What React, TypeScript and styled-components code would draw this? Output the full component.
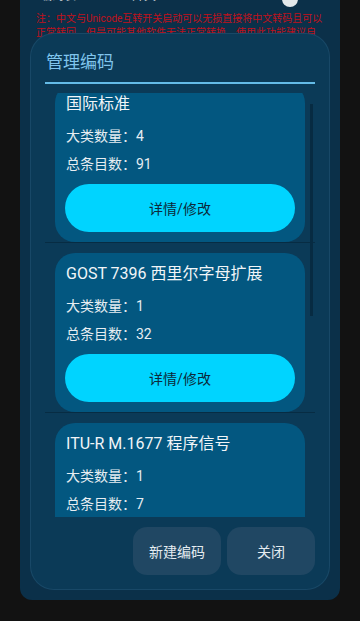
import { useLayoutEffect, useRef } from "react";
import styled, { createGlobalStyle } from "styled-components";

const GlobalStyle = createGlobalStyle`
  html, body {
    margin: 0;
    padding: 0;
    background: #121212;
  }
  body {
    font-family: Roboto, "Noto Sans CJK SC", sans-serif;
  }
`;

const codeTables = [
  { name: "国际标准", groups: 4, entries: 91 },
  { name: "GOST 7396 西里尔字母扩展", groups: 1, entries: 32 },
  { name: "ITU-R M.1677 程序信号", groups: 1, entries: 7 },
  { name: "日文假名", groups: 2, entries: 46 },
  { name: "自定义编码", groups: 1, entries: 12 },
];

const App = () => {
  const listRef = useRef<HTMLDivElement>(null);

  useLayoutEffect(() => {
    if (listRef.current) listRef.current.scrollTop = 20;
  }, []);

  return (
    <>
      <GlobalStyle />
      <Screen>
        <Panel>
          <TopStrip>
            <CutLabel>编码表</CutLabel>
            <CutLabel>开关</CutLabel>
            <Spacer />
            <SwitchKnob />
          </TopStrip>
          <Note>
            <NoteLine>注：中文与Unicode互转开关启动可以无损直接将中文转码且可以</NoteLine>
            <NoteLine>正常转回，但是可能其他软件无法正常转换，使用此功能建议自</NoteLine>
          </Note>
        </Panel>

        <Dialog>
          <DialogTitle>管理编码</DialogTitle>
          <TitleRule />
          <ListFrame>
            <List ref={listRef}>
              {codeTables.map((table) => (
                <Item key={table.name}>
                  <Card>
                    <CardTitle>{table.name}</CardTitle>
                    <Stats>
                      <Stat>大类数量：{table.groups}</Stat>
                      <Stat>总条目数：{table.entries}</Stat>
                    </Stats>
                    <DetailButton>详情/修改</DetailButton>
                  </Card>
                </Item>
              ))}
            </List>
            <ScrollThumb />
          </ListFrame>
          <Footer>
            <FooterButton>新建编码</FooterButton>
            <FooterButton>关闭</FooterButton>
          </Footer>
        </Dialog>
      </Screen>
    </>
  );
};

export default App;

const Screen = styled("div")`
  position: relative;
  width: 360px;
  height: 621px;
  overflow: hidden;
`;

const Panel = styled("div")`
  margin: 0 20px;
  height: 600px;
  background: #0b3049;
  border-radius: 0 0 12px 12px;
  overflow: hidden;
`;

const TopStrip = styled("div")`
  display: flex;
  align-items: flex-end;
  height: 7px;
  overflow: hidden;
  padding: 0 42px 0 20px;
  gap: 56px;
`;

const CutLabel = styled("span")`
  font-size: 12px;
  line-height: 12px;
  color: #cfd6db;
  margin-bottom: 5px;
`;

const Spacer = styled("div")`
  flex: 1;
`;

const SwitchKnob = styled("div")`
  width: 16px;
  height: 16px;
  border-radius: 50%;
  background: #e3e8eb;
  flex-shrink: 0;
`;

const Note = styled("div")`
  padding: 5px 16px 0;
  font-size: 10px;
  line-height: 14px;
  color: #c0101b;
`;

const NoteLine = styled("div")`
  white-space: nowrap;
`;

const Dialog = styled("div")`
  position: absolute;
  top: 33px;
  left: 30px;
  width: 300px;
  height: 557px;
  box-sizing: border-box;
  padding: 16px 14px 14px;
  border-radius: 24px;
  border: 1px solid rgba(120, 180, 220, 0.12);
  background: #0b3a57;
  display: flex;
  flex-direction: column;
`;

const DialogTitle = styled("div")`
  font-size: 17px;
  line-height: 24px;
  color: #80c5ec;
  padding-left: 1px;
`;

const TitleRule = styled("div")`
  height: 2px;
  margin-top: 8px;
  background: #64bbe7;
`;

const ListFrame = styled("div")`
  position: relative;
  flex: 1;
  min-height: 0;
  margin-top: 9px;
  display: flex;
  flex-direction: column;
`;

const List = styled("div")`
  flex: 1;
  min-height: 0;
  overflow-y: auto;
  scrollbar-width: none;

  &::-webkit-scrollbar {
    display: none;
  }
`;

const ScrollThumb = styled("div")`
  position: absolute;
  top: 11px;
  right: 2px;
  width: 3px;
  height: 212px;
  background: #072b42;
`;

const Item = styled("div")`
  padding-top: 10px;
  border-bottom: 1px solid #072c43;
`;

const Card = styled("div")`
  margin: 0 10px;
  padding: 10px;
  border-radius: 20px;
  background: #035780;
`;

const CardTitle = styled("div")`
  font-size: 16px;
  line-height: 22px;
  color: #f1f5f8;
  padding-left: 1px;
  white-space: nowrap;
`;

const Stats = styled("div")`
  margin-top: 7px;
  padding-left: 1px;
`;

const Stat = styled("div")`
  font-size: 14px;
  line-height: 28px;
  color: #e6edf2;
`;

const DetailButton = styled("button")`
  display: block;
  width: 100%;
  height: 48px;
  margin-top: 6px;
  border: none;
  border-radius: 24px;
  background: #00d4ff;
  color: #0c2a3a;
  font-family: inherit;
  font-size: 14px;
`;

const Footer = styled("div")`
  display: flex;
  justify-content: flex-end;
  gap: 6px;
  margin-top: 10px;
`;

const FooterButton = styled("button")`
  width: 88px;
  height: 48px;
  border: none;
  border-radius: 14px;
  background: #204763;
  color: #e4ebf0;
  font-family: inherit;
  font-size: 14px;
`;
